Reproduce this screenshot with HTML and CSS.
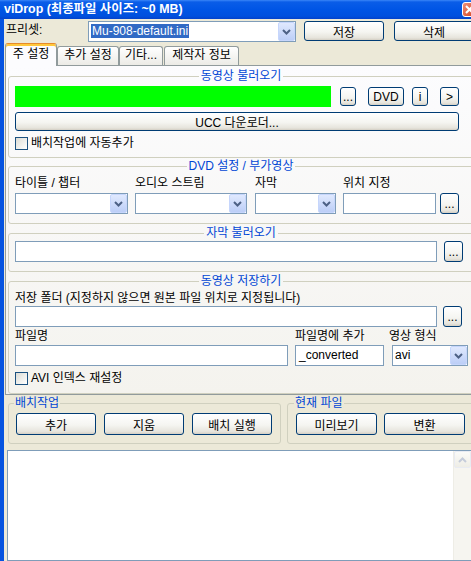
FILE: index.html
```html
<!DOCTYPE html>
<html lang="ko">
<head>
    <meta charset="UTF-8">
    <title>viDrop</title>
    <link rel="stylesheet" href="styles.css">
</head>
<body>

<div class="window">
    <div class="titlebar">
        <span class="title">viDrop (최종파일 사이즈: ~0 MB)</span>
        <span class="close-btn">
            <svg width="9" height="9" viewBox="0 0 9 9"><path d="M1 1L8 8M8 1L1 8" stroke="#fff" stroke-width="2"/></svg>
        </span>
    </div>

    <div class="frame">
        <div class="preset-row">
            <span class="preset-label">프리셋:</span>
            <div class="combo combo-preset">
                <span class="combo-text"><span class="selected">Mu-908-default.ini</span></span>
                <span class="drop"><svg width="9" height="6" viewBox="0 0 9 6"><path d="M1 1L4.5 4.5L8 1" stroke="#4D6185" stroke-width="2" fill="none"/></svg></span>
            </div>
            <button class="btn btn-save">저장</button>
            <button class="btn btn-delete">삭제</button>
        </div>

        <div class="tabs">
            <div class="tab active tab-main">주 설정</div>
            <div class="tab tab-extra">추가 설정</div>
            <div class="tab tab-etc">기타...</div>
            <div class="tab tab-author">제작자 정보</div>
        </div>

        <div class="panel">
            <fieldset class="group group-load">
                <legend>동영상 불러오기</legend>
                <div class="load-row">
                    <div class="green-bar"></div>
                    <button class="btn btn-browse">...</button>
                    <button class="btn btn-dvd">DVD</button>
                    <button class="btn btn-info">i</button>
                    <button class="btn btn-next">&gt;</button>
                </div>
                <button class="btn btn-ucc">UCC 다운로더...</button>
                <div class="check"><span class="box"></span>배치작업에 자동추가</div>
            </fieldset>

            <fieldset class="group group-dvd">
                <legend>DVD 설정 / 부가영상</legend>
                <div class="dvd-grid">
                    <span class="lbl">타이틀 / 챕터</span>
                    <span class="lbl">오디오 스트림</span>
                    <span class="lbl">자막</span>
                    <span class="lbl">위치 지정</span>
                    <span></span>
                    <div class="combo sel-title"><span class="combo-text"></span><span class="drop"><svg width="9" height="6" viewBox="0 0 9 6"><path d="M1 1L4.5 4.5L8 1" stroke="#4D6185" stroke-width="2" fill="none"/></svg></span></div>
                    <div class="combo sel-audio"><span class="combo-text"></span><span class="drop"><svg width="9" height="6" viewBox="0 0 9 6"><path d="M1 1L4.5 4.5L8 1" stroke="#4D6185" stroke-width="2" fill="none"/></svg></span></div>
                    <div class="combo sel-sub"><span class="combo-text"></span><span class="drop"><svg width="9" height="6" viewBox="0 0 9 6"><path d="M1 1L4.5 4.5L8 1" stroke="#4D6185" stroke-width="2" fill="none"/></svg></span></div>
                    <div class="field pos-field"></div>
                    <button class="btn btn-dots">...</button>
                </div>
            </fieldset>

            <fieldset class="group group-sub">
                <legend>자막 불러오기</legend>
                <div class="path-row">
                    <div class="field path-field"></div>
                    <button class="btn btn-dots">...</button>
                </div>
            </fieldset>

            <fieldset class="group group-save">
                <legend>동영상 저장하기</legend>
                <span class="lbl">저장 폴더 (지정하지 않으면 원본 파일 위치로 지정됩니다)</span>
                <div class="path-row folder-row">
                    <div class="field path-field"></div>
                    <button class="btn btn-dots">...</button>
                </div>
                <div class="name-grid">
                    <span class="lbl">파일명</span>
                    <span class="lbl">파일명에 추가</span>
                    <span class="lbl lbl-format">영상 형식</span>
                    <div class="field name-field"></div>
                    <div class="field suffix-field">_converted</div>
                    <div class="combo sel-format"><span class="combo-text">avi</span><span class="drop"><svg width="9" height="6" viewBox="0 0 9 6"><path d="M1 1L4.5 4.5L8 1" stroke="#4D6185" stroke-width="2" fill="none"/></svg></span></div>
                </div>
                <div class="check"><span class="box"></span>AVI 인덱스 재설정</div>
            </fieldset>
        </div>

        <div class="bottom-row">
            <fieldset class="group group-batch">
                <legend>배치작업</legend>
                <div class="btn-row">
                    <button class="btn btn-wide">추가</button>
                    <button class="btn btn-wide">지움</button>
                    <button class="btn btn-wide">배치 실행</button>
                </div>
            </fieldset>
            <fieldset class="group group-current">
                <legend>현재 파일</legend>
                <div class="btn-row">
                    <button class="btn btn-wide">미리보기</button>
                    <button class="btn btn-wide">변환</button>
                </div>
            </fieldset>
        </div>

        <div class="listbox">
            <div class="scrollbar">
                <span class="scroll-up"><svg width="9" height="6" viewBox="0 0 9 6"><path d="M1 5L4.5 1.5L8 5" stroke="#C5CCDA" stroke-width="2" fill="none"/></svg></span>
            </div>
        </div>
    </div>
</div>

</body>
</html>
```

FILE: styles.css
```css
* {
    margin: 0;
    padding: 0;
    box-sizing: border-box;
}

body {
    width: 471px;
    height: 561px;
    overflow: hidden;
    background: #ECE9D8;
    color: #000;
    font-family: "Liberation Sans", "Noto Sans CJK KR", sans-serif;
    font-size: 12px;
}

.window {
    width: 484px;
    height: 561px;
    display: flex;
    flex-direction: column;
}

/* title bar */
.titlebar {
    flex: none;
    height: 19px;
    display: flex;
    align-items: center;
    justify-content: space-between;
    padding: 0 7px 0 4px;
    background: linear-gradient(#3A86F7 0, #0A5DE8 2px, #0055E5 50%, #0050DE 85%, #0342CB 100%);
    color: #fff;
    font-weight: bold;
}

.title {
    line-height: 19px;
    font-size: 12.4px;
}

.close-btn {
    width: 15px;
    height: 15px;
    border: 1px solid #fff;
    border-radius: 3px;
    background: linear-gradient(135deg, #EE9078, #D5431F);
    display: flex;
    align-items: center;
    justify-content: center;
}

.frame {
    flex: 1;
    display: flex;
    flex-direction: column;
    border-left: 4px solid #0553E0;
    min-height: 0;
}

/* common controls */
.btn {
    font: inherit;
    color: #000;
    border: 1px solid #003C74;
    border-radius: 3px;
    background: linear-gradient(#FFFFFF 0%, #F5F5F1 55%, #E6E4DC 88%, #D4CFC4 100%);
    display: flex;
    align-items: center;
    justify-content: center;
    padding: 0;
    flex: none;
}

.field {
    height: 21px;
    border: 1px solid #7F9DB9;
    background: #fff;
    padding-left: 2px;
    line-height: 19px;
}

.combo {
    height: 21px;
    display: flex;
    border: 1px solid #7F9DB9;
    background: #fff;
}

.combo-text {
    flex: 1;
    padding-left: 2px;
    line-height: 19px;
    white-space: nowrap;
    overflow: hidden;
}

.drop {
    width: 17px;
    height: 19px;
    flex: none;
    border: 1px solid #C6D6FC;
    border-radius: 2px;
    background: linear-gradient(#E0E9FE, #BCCEF7);
    display: flex;
    align-items: center;
    justify-content: center;
}

.lbl {
    line-height: 14px;
    white-space: nowrap;
}

.check {
    display: flex;
    align-items: center;
    height: 13px;
    margin-top: 6px;
    line-height: 13px;
}

.box {
    width: 13px;
    height: 13px;
    border: 1px solid #1C5180;
    background: linear-gradient(135deg, #DCDCD5, #FFFFFF);
    margin-right: 3px;
}

/* preset row */
.preset-row {
    flex: none;
    height: 24px;
    display: flex;
    align-items: flex-start;
    padding-top: 2px;
}

.preset-label {
    width: 84px;
    padding-left: 2px;
    line-height: 19px;
}

.combo-preset {
    width: 208px;
}

.combo-preset .combo-text {
    padding-top: 2px;
    line-height: 14px;
}

.selected {
    display: inline-block;
    background: #316AC5;
    color: #fff;
    padding: 0 1px;
}

.btn-save {
    width: 80px;
    height: 20px;
    margin-left: 8px;
}

.btn-delete {
    width: 80px;
    height: 20px;
    margin-left: 10px;
}

/* tabs */
.tabs {
    flex: none;
    height: 22px;
    display: flex;
    align-items: flex-end;
    padding-left: 1px;
}

.tab {
    height: 19px;
    border: 1px solid #919B9C;
    border-bottom: none;
    border-radius: 3px 3px 0 0;
    background: linear-gradient(#FFFFFF, #ECEBE6);
    text-align: center;
    line-height: 17px;
}

.tab.active {
    position: relative;
    z-index: 1;
    height: 23px;
    margin-bottom: -1px;
    background: #FCFCFE;
    border-top: 1px solid #E68B2C;
    box-shadow: inset 0 2px 0 #FFC83C;
    line-height: 21px;
}

.tab-main { width: 52px; }
.tab-extra { width: 62px; }
.tab-etc { width: 44px; }
.tab-author { width: 75px; margin-left: 1px; }

/* tab page */
.panel {
    flex: none;
    margin-left: 1px;
    border: 1px solid #919B9C;
    background: linear-gradient(#FCFCFE, #F4F3EE);
    padding: 3px 0 0 2px;
}

.group {
    border: 1px solid #D0D0BF;
    border-radius: 3px;
    padding: 0 6px;
    min-width: 0;
}

.group legend {
    margin: 0 auto;
    padding: 0 2px;
    color: #0046D5;
    line-height: 14px;
}

.panel .group {
    width: 466px;
}

.group-load {
    padding-top: 3px;
    padding-bottom: 7px;
}

.load-row {
    display: flex;
    align-items: center;
    height: 21px;
}

.green-bar {
    width: 316px;
    height: 21px;
    background: #00FF00;
}

.load-row .btn {
    height: 19px;
}

.btn-browse { width: 16px; margin-left: 9px; }
.btn-dvd { width: 36px; margin-left: 12px; }
.btn-info { width: 16px; margin-left: 8px; }
.btn-next { width: 19px; margin-left: 12px; }

.btn-ucc {
    width: 444px;
    height: 19px;
    margin-top: 5px;
}

.group-dvd {
    margin-top: 1px;
    padding-top: 3px;
    padding-bottom: 9px;
}

.dvd-grid {
    display: grid;
    grid-template-columns: 120px 120px 88px 97px 19px;
    grid-template-rows: 14px 21px;
    row-gap: 3px;
}

.sel-title { width: 113px; }
.sel-audio { width: 112px; }
.sel-sub { width: 81px; }
.pos-field { width: 93px; }

.btn-dots {
    width: 19px;
    height: 21px;
}

.group-sub {
    margin-top: 2px;
    padding-top: 1px;
    padding-bottom: 9px;
}

.path-row {
    display: flex;
}

.path-field {
    width: 422px;
}

.path-row .btn-dots {
    margin-left: 7px;
}

.group-save {
    margin-top: 2px;
    padding-top: 3px;
    padding-bottom: 8px;
}

.folder-row {
    margin-top: 1px;
}

.folder-row .btn-dots {
    margin-left: 6px;
}

.name-grid {
    display: grid;
    grid-template-columns: 280px 97px 80px;
    grid-template-rows: 14px 21px;
    row-gap: 2px;
    margin-top: 2px;
}

.lbl-format {
    margin-left: -3px;
}

.name-field { width: 273px; }
.suffix-field { width: 89px; padding-left: 3px; }
.sel-format { width: 76px; }

/* bottom buttons */
.bottom-row {
    flex: none;
    display: flex;
    margin-top: 1px;
    padding-left: 4px;
}

.bottom-row .group legend {
    margin: 0 0 0 -2px;
    padding: 0 1px;
}

.group-batch {
    width: 273px;
    padding: 3px 7px 8px 7px;
}

.group-current {
    flex: 1;
    margin-left: 6px;
    padding: 3px 8px 8px 8px;
}

.group-current legend {
    margin-left: -1px;
}

.btn-row {
    display: flex;
    gap: 8px;
}

.group-current .btn-row {
    gap: 7px;
}

.btn-wide {
    width: 80px;
    height: 22px;
}

.group-current .btn-wide {
    width: 81px;
}

/* list */
.listbox {
    flex: 1;
    margin: 6px 0 0 3px;
    border: 1px solid #7F9DB9;
    background: #fff;
    display: flex;
    justify-content: flex-end;
}

.scrollbar {
    width: 18px;
    margin-right: 12px;
    background: #F6F5F0;
    border-left: 1px solid #EEEDE6;
}

.scroll-up {
    display: flex;
    align-items: center;
    justify-content: center;
    height: 17px;
    border: 1px solid #E8EBF2;
    border-radius: 2px;
    background: linear-gradient(#FBFBF8, #EEEDE6);
}
```
